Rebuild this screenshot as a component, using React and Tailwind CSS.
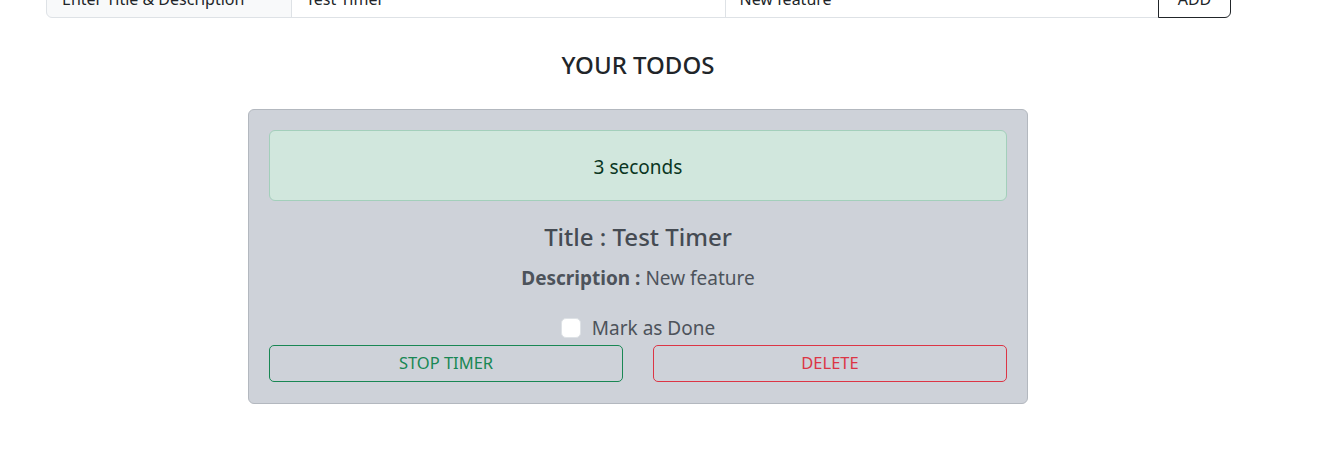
export default function App() {
  return (
    <div className="min-h-screen bg-white font-['Noto_Sans','Open_Sans',sans-serif] text-[#212529]">
      <div className="w-[1276px]">
        <div className="-mt-[20px] pl-[46px] pr-[45px]">
          <div className="flex h-[38px] w-full">
            <span className="flex w-[246px] shrink-0 items-center rounded-l-md border border-[#dee2e6] bg-[#f8f9fa] px-[15px] text-base">
              Enter Title &amp; Description
            </span>
            <input
              type="text"
              defaultValue="Test Timer"
              className="-ml-px w-full min-w-0 border border-[#dee2e6] px-[14px] text-base outline-none"
            />
            <input
              type="text"
              defaultValue="New feature"
              className="-ml-px w-full min-w-0 border border-[#dee2e6] px-[14px] text-base outline-none"
            />
            <button className="-ml-px w-[73px] shrink-0 rounded-r-md border border-[#212529] text-base">
              ADD
            </button>
          </div>
        </div>

        <h4 className="mt-[33px] text-center text-[24px] font-medium leading-[1.2]">YOUR TODOS</h4>

        <div className="mx-auto mt-[29px] w-[780px] rounded-md border border-[#b3b8bf] bg-[#ced2d9] px-[20px] pt-[20px] pb-[21px]">
          <div className="flex h-[71px] items-center justify-center rounded-md border border-[#a3cfbb] bg-[#d1e7dd] pt-[3px] text-[19px] text-[#0a3622]">
            3 seconds
          </div>

          <h4 className="mt-[22px] text-center text-[24px] font-medium leading-[1.2] text-[#454b53]">
            Title : Test Timer
          </h4>
          <p className="mt-[12px] text-center text-[19px] text-[#4d535b]">
            <span className="font-bold">Description :</span> New feature
          </p>

          <label className="mt-[24px] flex items-center justify-center gap-[11px] text-[19px] leading-[24px] text-[#4d535b]">
            <span className="h-[20px] w-[20px] rounded-[5px] border border-[#dee2e6] bg-white" />
            Mark as Done
          </label>

          <div className="mt-[5px] flex gap-[30px]">
            <button className="h-[37px] flex-1 rounded-[5px] border border-[#198754] text-[16.5px] text-[#198754]">
              STOP TIMER
            </button>
            <button className="h-[37px] flex-1 rounded-[5px] border border-[#dc3545] text-[16.5px] text-[#dc3545]">
              DELETE
            </button>
          </div>
        </div>
      </div>
    </div>
  );
}
